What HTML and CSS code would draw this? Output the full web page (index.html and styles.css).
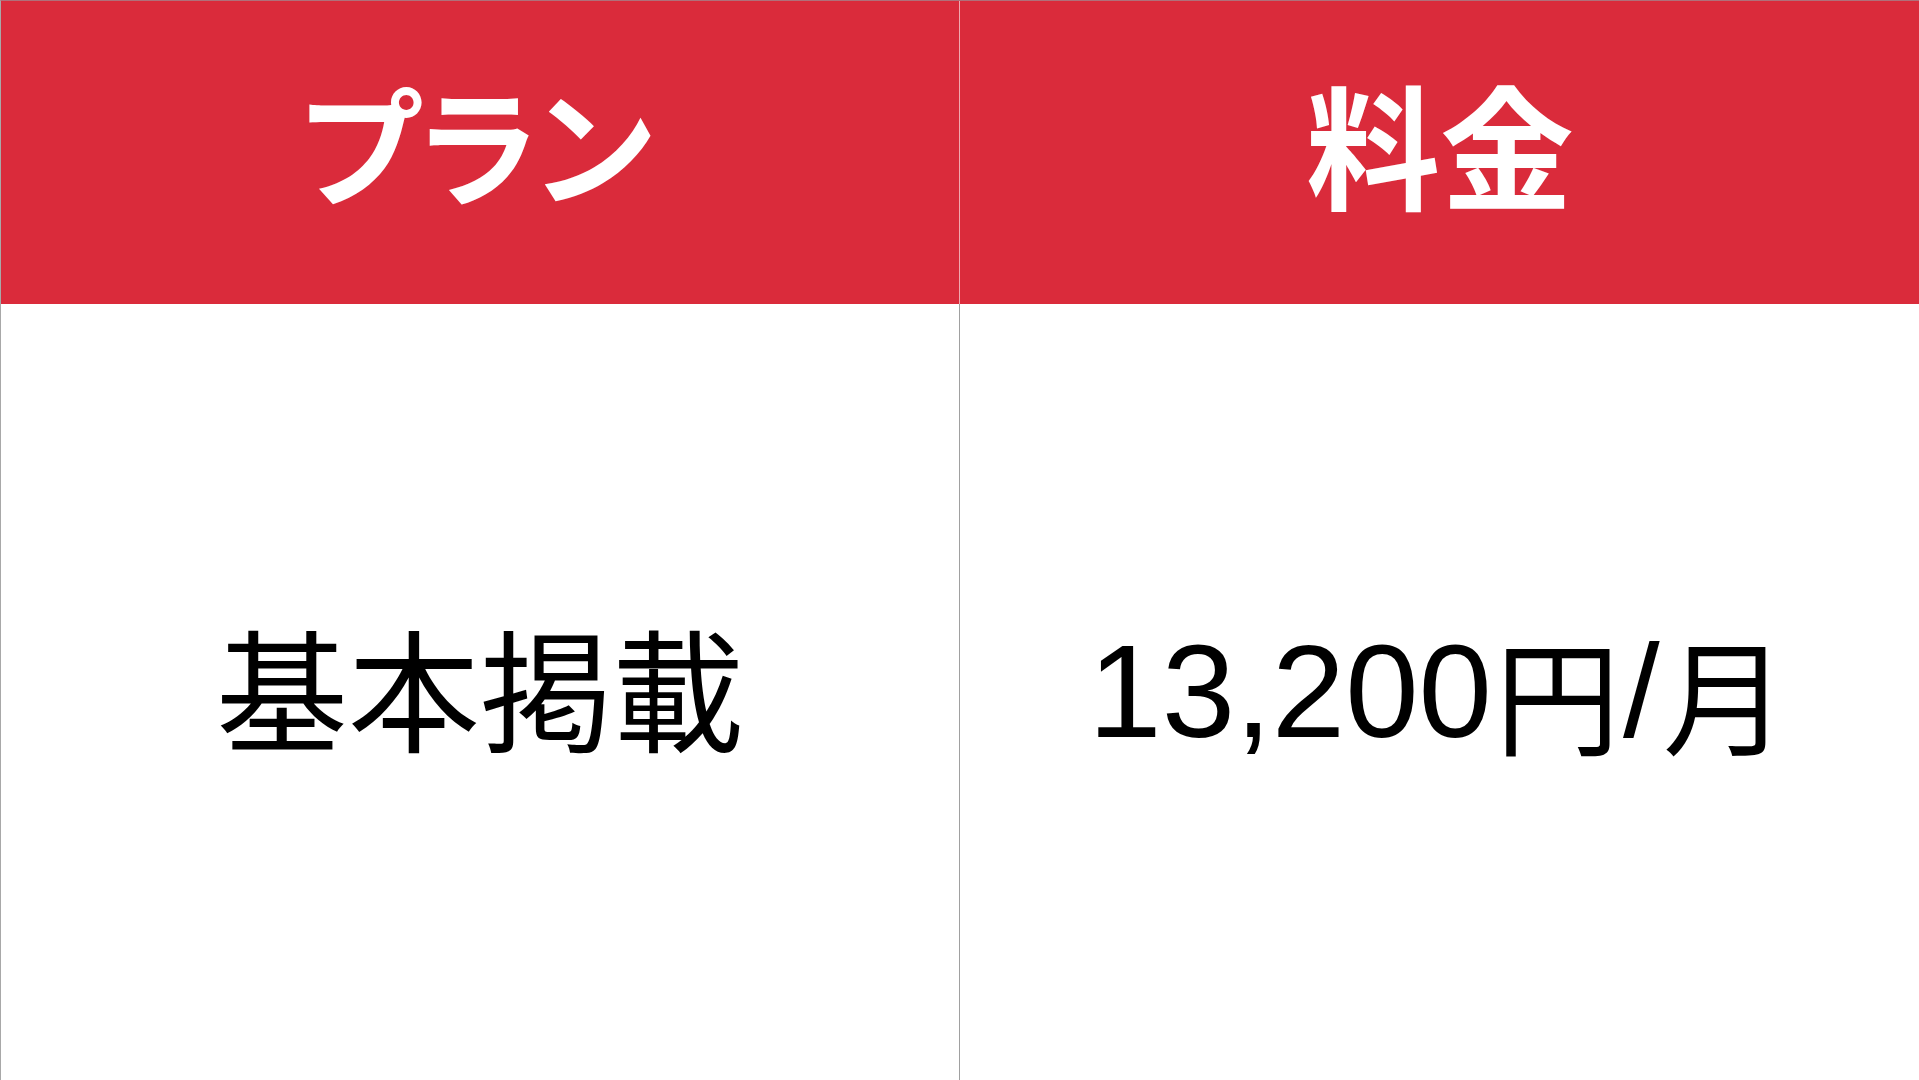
FILE: index.html
```html
<!DOCTYPE html>
<html lang="ja">
<head>
<meta charset="utf-8">
<title>料金表</title>
<link rel="stylesheet" href="styles.css">
</head>
<body>
<div class="price-table">
  <div class="cell head head-left"><span class="plan-label">プラン</span></div>
  <div class="cell head head-right">料金</div>
  <div class="cell body body-left">基本掲載</div>
  <div class="cell body body-right"><span class="num">13,200</span><span class="jp">円</span><span class="num slash">/</span><span class="jp">月</span></div>
</div>
</body>
</html>
```
FILE: styles.css
```css
html, body {
  margin: 0;
  padding: 0;
  background: #ffffff;
}
.price-table {
  display: grid;
  grid-template-columns: 959px 960px;
  grid-template-rows: 303px 777px;
  width: 1919px;
  height: 1080px;
  box-sizing: border-box;
  border-left: 1px solid #a8a8a8;
  border-top: 1px solid #b0707a;
}
.cell {
  display: flex;
  align-items: center;
  justify-content: center;
  box-sizing: border-box;
  font-family: "Noto Sans CJK JP", "Noto Sans", sans-serif;
}
.head {
  background: #da2b3b;
  color: #ffffff;
  font-weight: 700;
  font-size: 134px;
  padding-bottom: 22px;
}
.plan-label {
  font-size: 128px;
  letter-spacing: -11px;
  margin-right: 17px;
}
.head-left {
  border-right: 1px solid #f0a8ae;
}
.body {
  color: #000000;
  font-weight: 400;
  font-size: 132px;
  padding-bottom: 17px;
}
.body-left {
  border-right: 1px solid #a0a0a0;
}
.body-right {
  padding-right: 4px;
  padding-bottom: 2px;
}
.num {
  font-family: "Liberation Sans", Arial, sans-serif;
}
.jp {
  font-size: 125px;
  vertical-align: 18px;
  margin-left: 3px;
}
.slash {
  margin-left: 3px;
}
```
